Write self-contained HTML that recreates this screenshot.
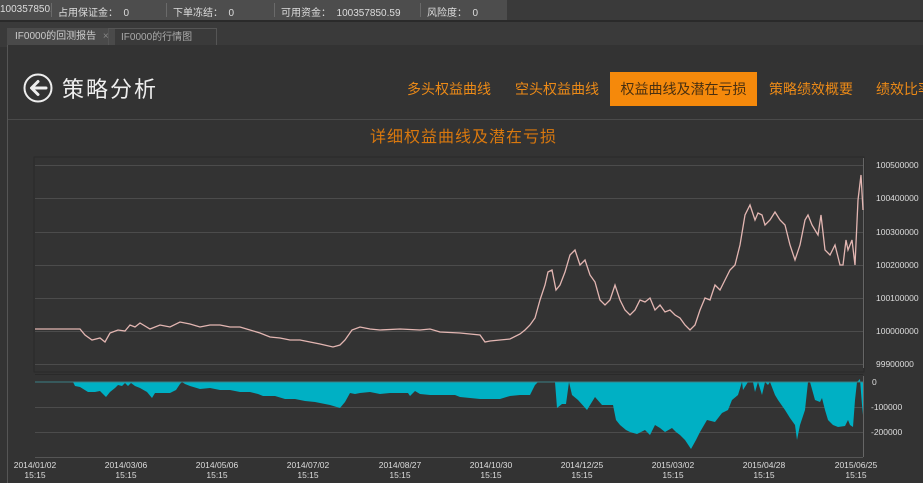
<!DOCTYPE html>
<html><head><meta charset="utf-8"><style>
body{margin:0;width:923px;height:483px;overflow:hidden;background:#333;font-family:"Liberation Sans","Noto Sans CJK SC",sans-serif;position:relative}
.top{position:absolute;left:0;top:0;width:507px;height:20px;background:#4d4d4d;color:#ddd;font-size:10px}
.top span{position:absolute;top:4px}
.topr{position:absolute;left:507px;top:0;width:416px;height:20px;background:#3a3a3a}
.sep{position:absolute;top:3px;width:1px;height:14px;background:#6a6a6a}
.tabs{position:absolute;left:0;top:20px;width:923px;height:25px;background:#3a3a3a;border-top:2px solid #2a2a2a}
.tab{position:absolute;top:6px;height:18px;font-size:10px;line-height:18px;color:#ccc}
.main{position:absolute;left:7px;top:45px;width:916px;height:438px;background:#333;border-left:1px solid #555}
.nav{position:absolute;top:72px;height:34px;line-height:34px;font-size:14px;color:#ec8a17;font-family:"Noto Sans CJK SC",sans-serif}
</style></head><body>
<div class="top">
<span style="left:0">100357850.</span><div class="sep" style="left:51px"></div>
<span style="left:58px">占用保证金：&nbsp; 0</span><div class="sep" style="left:166px"></div>
<span style="left:173px">下单冻结：&nbsp; 0</span><div class="sep" style="left:274px"></div>
<span style="left:281px">可用资金：&nbsp; 100357850.59</span><div class="sep" style="left:420px"></div>
<span style="left:427px">风险度：&nbsp; 0</span>
</div>
<div class="topr"></div>
<div class="tabs">
<div class="tab" style="left:7px;width:100px;background:#4a4a4a;padding-left:8px">IF0000的回测报告 <span style="color:#888;margin-left:4px">×</span></div>
<div class="tab" style="left:108px;width:95px;border:1px solid #555;padding-left:12px;color:#aaa">IF0000的行情图</div>
</div>
<div class="main"></div>
<div style="position:absolute;left:8px;top:119px;width:915px;height:1px;background:#4a4a4a"></div>
<svg style="position:absolute;left:22px;top:72px" width="32" height="32" viewBox="0 0 32 32"><circle cx="16" cy="16" r="13.5" fill="none" stroke="#eee" stroke-width="2"/><path d="M24 16H10M16 9.5L9.5 16L16 22.5" fill="none" stroke="#eee" stroke-width="3" stroke-linecap="round" stroke-linejoin="round"/></svg>
<div style="position:absolute;left:62px;top:72px;font-size:22px;color:#eee;font-family:'Noto Sans CJK SC',sans-serif;letter-spacing:2px">策略分析</div>
<div class="nav" style="left:407px">多头权益曲线</div>
<div class="nav" style="left:515px">空头权益曲线</div>
<div class="nav" style="left:610px;width:147px;background:#f5890b;color:#4a3010;text-align:center">权益曲线及潜在亏损</div>
<div class="nav" style="left:769px">策略绩效概要</div>
<div class="nav" style="left:876px;white-space:nowrap">绩效比率</div>
<div style="position:absolute;left:0;width:923px;top:123px;text-align:center;font-size:16px;color:#d9780e;font-family:'Noto Sans CJK SC',sans-serif;letter-spacing:1px;text-indent:4px">详细权益曲线及潜在亏损</div>
<svg style="position:absolute;left:0;top:0" width="923" height="483" font-family="Liberation Sans, sans-serif" font-size="8.5" fill="#ddd">
<rect x="34" y="157" width="830" height="215" fill="none" stroke="#2a2a2a"/>
<g stroke="#4c4c4c" stroke-width="1">
<line x1="35" y1="165.5" x2="863" y2="165.5"/><line x1="35" y1="198.5" x2="863" y2="198.5"/><line x1="35" y1="232.5" x2="863" y2="232.5"/><line x1="35" y1="265.5" x2="863" y2="265.5"/><line x1="35" y1="298.5" x2="863" y2="298.5"/><line x1="35" y1="331.5" x2="863" y2="331.5"/><line x1="35" y1="364.5" x2="863" y2="364.5"/>
<line x1="35" y1="407.5" x2="863" y2="407.5"/><line x1="35" y1="432.5" x2="863" y2="432.5"/>
</g>
<line x1="863.5" y1="158" x2="863.5" y2="368" stroke="#666"/>
<line x1="863.5" y1="376" x2="863.5" y2="457" stroke="#666"/>
<line x1="35" y1="457.5" x2="863" y2="457.5" stroke="#555"/>
<line x1="35" y1="374.5" x2="863" y2="374.5" stroke="#2a2a2a"/>
<g text-anchor="start">
<text x="876" y="168">100500000</text><text x="876" y="201">100400000</text><text x="876" y="235">100300000</text><text x="876" y="268">100200000</text><text x="876" y="301">100100000</text><text x="876" y="334">100000000</text><text x="876" y="367">99900000</text>
<text x="872" y="385">0</text><text x="871" y="410">-100000</text><text x="871" y="435">-200000</text>
</g>
<path fill="#00b0c4" d="M35 382L73 382L75 386L80 387L88 392L95 392L100 391L106 397L110 392L115 388L118 385L122 386L125 383L128 386L131 383L135 386L140 388L147 392L152 398L155 393L160 393L170 393L176 390L180 384L182 382L185 384L190 386L200 389L210 388L220 390L230 390L240 392L250 392L258 394L263 396L275 396L285 399L295 399L305 401L315 402L330 405L340 408L345 402L350 393L355 394L360 393L370 392L380 394L390 393L400 393L408 393L410 396L415 391L420 394L430 395L440 395L455 395L460 397L470 398L480 399L490 399L500 399L510 396L520 395L530 395L535 385L538 382L555 382L557 408L562 404L566 404L569 382L572 395L578 400L587 410L595 397L602 405L613 405L616 420L620 425L626 430L630 432L637 434L641 432L645 430L650 435L655 425L660 428L665 432L672 428L676 432L680 435L685 440L691 449L696 440L700 432L707 420L715 422L722 413L728 410L732 400L738 395L742 382L743 390L748 382L753 382L755 392L758 382L762 395L765 382L768 385L770 382L775 395L778 400L785 410L790 418L795 425L797 440L800 425L805 410L808 382L810 382L815 400L820 402L822 398L825 410L828 420L833 425L838 427L845 426L848 420L850 425L853 427L855 400L857 382L860 379L862 405L863 415L863 382Z"/>
<line x1="35" y1="382" x2="863" y2="382" stroke="#3b7f86" stroke-width="1"/>
<polyline fill="none" stroke="#e3b6b2" stroke-width="1.3" points="35,329 80,329 85,335 92,340 100,338 105,342 110,333 118,330 125,331 130,325 135,327 140,323 150,329 160,325 170,327 180,322 190,324 200,327 210,325 220,325 230,327 240,327 250,330 260,333 270,337 280,338 290,340 300,340 310,342 320,344 333,347 340,345 345,340 352,330 360,327 370,329 380,330 400,329 420,330 430,329 440,332 460,333 480,335 485,342 490,341 500,340 510,339 520,334 525,330 530,325 535,318 540,300 545,285 548,272 552,270 556,290 560,285 565,272 570,255 575,250 580,265 585,260 590,275 595,282 600,300 605,305 610,300 615,285 620,300 625,310 630,315 635,310 640,300 645,302 650,298 655,310 660,305 665,312 670,310 675,315 680,318 685,325 690,330 695,325 700,310 705,298 710,300 715,285 720,290 725,280 730,270 735,265 740,245 745,215 750,205 755,220 758,213 762,215 765,225 770,220 775,212 780,220 785,225 790,245 795,260 800,245 805,220 808,215 812,225 815,230 818,235 821,215 825,250 830,255 835,245 840,265 843,265 846,240 848,250 852,240 855,265 858,200 861,175 863,210"/>
<g text-anchor="middle">
<text x="35" y="468">2014/01/02</text><text x="35" y="478">15:15</text>
<text x="126" y="468">2014/03/06</text><text x="126" y="478">15:15</text>
<text x="217" y="468">2014/05/06</text><text x="217" y="478">15:15</text>
<text x="308" y="468">2014/07/02</text><text x="308" y="478">15:15</text>
<text x="400" y="468">2014/08/27</text><text x="400" y="478">15:15</text>
<text x="491" y="468">2014/10/30</text><text x="491" y="478">15:15</text>
<text x="582" y="468">2014/12/25</text><text x="582" y="478">15:15</text>
<text x="673" y="468">2015/03/02</text><text x="673" y="478">15:15</text>
<text x="764" y="468">2015/04/28</text><text x="764" y="478">15:15</text>
<text x="856" y="468">2015/06/25</text><text x="856" y="478">15:15</text>
</g>
</svg>
</body></html>
